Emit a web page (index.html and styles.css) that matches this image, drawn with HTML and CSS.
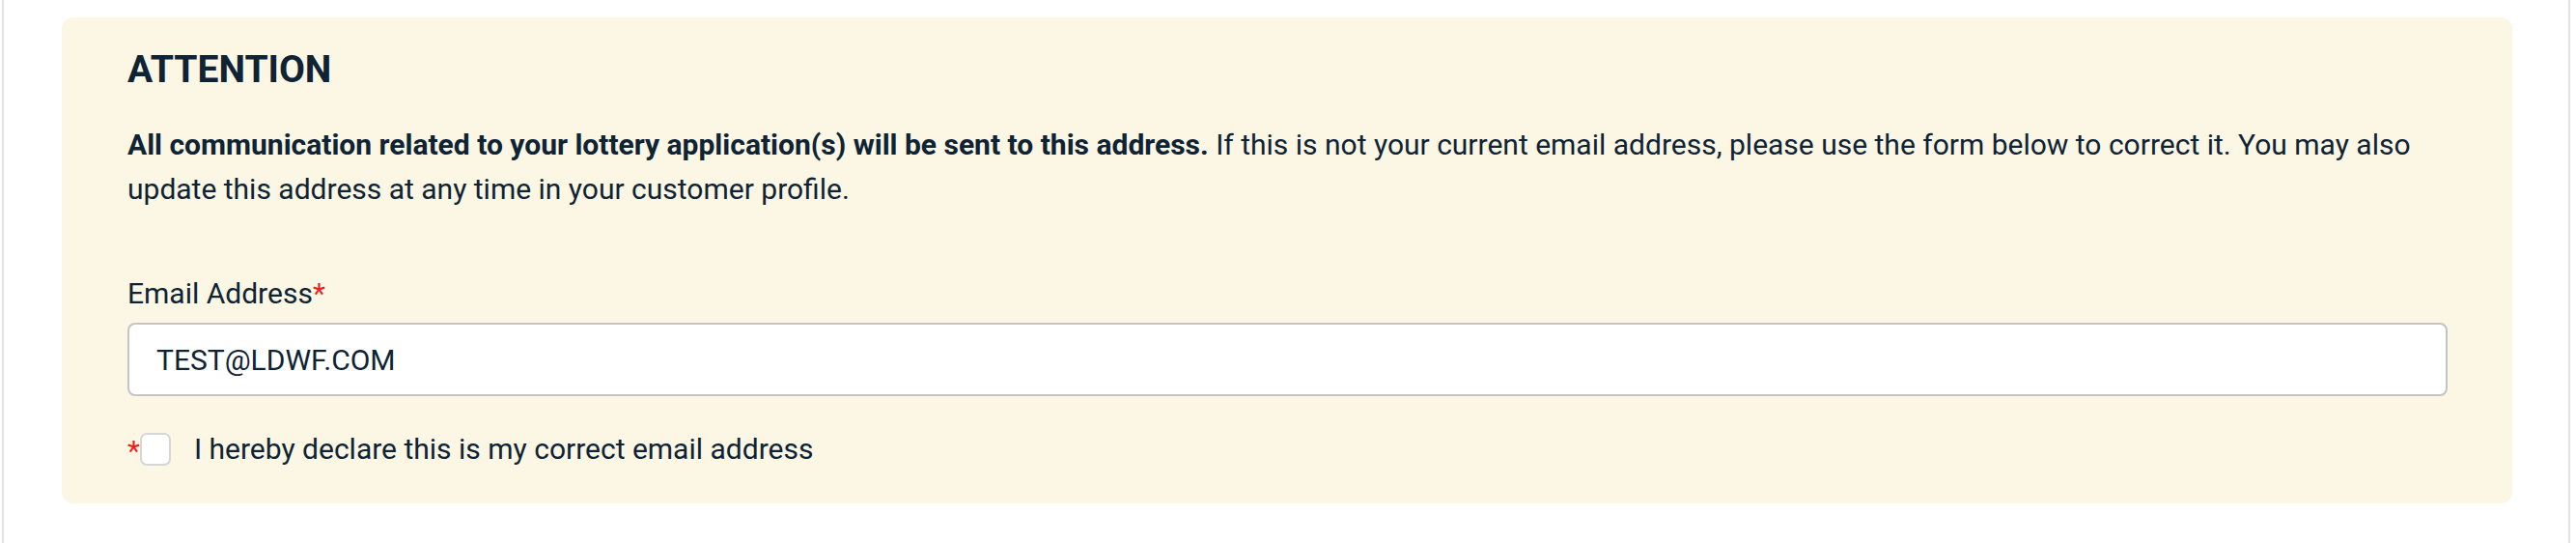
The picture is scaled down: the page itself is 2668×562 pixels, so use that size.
FILE: index.html
```html
<!DOCTYPE html>
<html lang="en">
<head>
    <meta charset="UTF-8">
    <meta name="viewport" content="width=device-width, initial-scale=1.0">
    <title>Confirm Email Address</title>
    <link rel="stylesheet" href="styles.css">
</head>
<body>

    <div class="page">
        <div class="notice">
            <h2 class="notice-title">ATTENTION</h2>
            <p class="notice-text"><strong>All communication related to your lottery application(s) will be sent to this address.</strong> If this is not your current email address, please use the form below to correct it. You may also update this address at any time in your customer profile.</p>

            <form class="email-form">
                <label class="field-label" for="email">Email Address<span class="req">*</span></label>
                <input class="text-input" id="email" type="email" value="TEST@LDWF.COM">

                <div class="check-row">
                    <span class="req req-check">*</span>
                    <input class="check" id="confirm" type="checkbox">
                    <label class="check-label" for="confirm">I hereby declare this is my correct email address</label>
                </div>
            </form>
        </div>
    </div>

</body>
</html>
```

FILE: styles.css
```css
body {
    margin: 0;
    font-family: Roboto, "Liberation Sans", sans-serif;
    font-size: 30px;
    line-height: 46px;
    color: #0e2334;
    background-color: #fff;
}
.page {
    margin: 0 6px 0 2px;
    min-height: 562px;
    box-sizing: border-box;
    padding: 18px 58px 0 60px;
    border-left: 2px solid #e2e2e2;
    border-right: 2px solid #e2e2e2;
}
.notice {
    background-color: #fcf6e4;
    border-radius: 12px;
    padding: 33px 67px 39px 68px;
}
.notice-title {
    margin: 0 0 33px;
    font-size: 39px;
    line-height: 43px;
    font-weight: 700;
}
.notice-text {
    margin: 0 0 62px;
}
.notice-text strong {
    font-weight: 700;
}
.field-label {
    display: block;
    margin-bottom: 7px;
}
.req {
    color: #f01c1c;
}
.text-input {
    display: block;
    width: 100%;
    height: 76px;
    box-sizing: border-box;
    padding: 0 28px;
    border: 2px solid #c4c4c4;
    border-radius: 8px;
    background-color: #fff;
    font-family: inherit;
    font-size: 30px;
    color: #0e2334;
}
.check-row {
    display: flex;
    align-items: center;
    margin-top: 38px;
    height: 34px;
}
.req-check {
    align-self: flex-start;
    line-height: 1;
    margin-top: 4px;
}
.check {
    appearance: none;
    -webkit-appearance: none;
    width: 32px;
    height: 34px;
    margin: 0 24px 0 0;
    border: 2px solid #d6d6d6;
    border-radius: 7px;
    background-color: #fff;
}
.check-label {
    line-height: 1;
}
```
